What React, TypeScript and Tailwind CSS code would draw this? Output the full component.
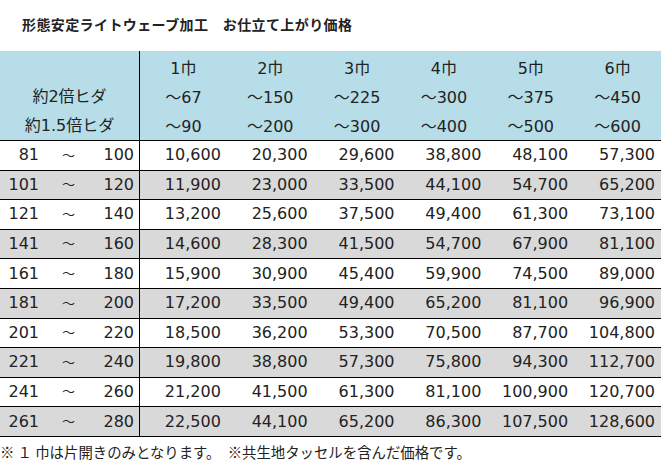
const rows: [number, number, number[]][] = [
  [81, 100, [10600, 20300, 29600, 38800, 48100, 57300]],
  [101, 120, [11900, 23000, 33500, 44100, 54700, 65200]],
  [121, 140, [13200, 25600, 37500, 49400, 61300, 73100]],
  [141, 160, [14600, 28300, 41500, 54700, 67900, 81100]],
  [161, 180, [15900, 30900, 45400, 59900, 74500, 89000]],
  [181, 200, [17200, 33500, 49400, 65200, 81100, 96900]],
  [201, 220, [18500, 36200, 53300, 70500, 87700, 104800]],
  [221, 240, [19800, 38800, 57300, 75800, 94300, 112700]],
  [241, 260, [21200, 41500, 61300, 81100, 100900, 120700]],
  [261, 280, [22500, 44100, 65200, 86300, 107500, 128600]],
];

const widths = [
  ['1巾', '～67', '～90'],
  ['2巾', '～150', '～200'],
  ['3巾', '～225', '～300'],
  ['4巾', '～300', '～400'],
  ['5巾', '～375', '～500'],
  ['6巾', '～450', '～600'],
];

const font = { fontFamily: '"DejaVu Sans", "Noto Sans CJK JP", sans-serif' };
const jp = { fontFamily: '"Noto Sans CJK JP", sans-serif' };

export default function App() {
  return (
    <div className="w-[661px] h-[468px] bg-white text-[#222] overflow-hidden" style={font}>
      <div className="h-[51px] pl-[22px] pt-[14px] text-[14px] font-bold leading-[20px] tracking-[0.4px]" style={jp}>
        形態安定ライトウェーブ加工　お仕立て上がり価格
      </div>

      <div className="flex bg-[#b7dde8] h-[90px] border-b border-black text-[16px]">
        <div className="w-[140px] border-r border-black flex flex-col items-center pt-[3px]">
          <div className="h-[29px]" />
          <div className="h-[29px] leading-[29px]">約2倍ヒダ</div>
          <div className="h-[29px] leading-[29px]">約1.5倍ヒダ</div>
        </div>
        <div className="flex-1 grid grid-cols-6 pt-[3px]">
          {widths.map((w) => (
            <div key={w[0]} className="flex flex-col items-center">
              {w.map((t) => (
                <div key={t} className="h-[29px] leading-[29px]">{t}</div>
              ))}
            </div>
          ))}
        </div>
      </div>

      {rows.map(([a, b, prices], i) => (
        <div key={a} className={`flex h-[29.6px] border-b border-black text-[16px] ${i % 2 === 1 ? 'bg-[#d9d9d9]' : 'bg-white'}`}>
          <div className="w-[140px] border-r border-black flex items-center">
            <span className="w-[39px] text-right">{a}</span>
            <span className="w-[59px] text-center text-[13px]">～</span>
            <span className="w-[36px] text-right">{b}</span>
          </div>
          <div className="flex-1 grid grid-cols-6 items-center">
            {prices.map((p, j) => (
              <div key={j} className="text-right pr-[6px]">{p.toLocaleString('en-US')}</div>
            ))}
          </div>
        </div>
      ))}

      <div className="pt-[5px] text-[14.4px] leading-[20px] whitespace-pre" style={jp}>
        ※ １ 巾は片開きのみとなります。　※共生地タッセルを含んだ価格です。
      </div>
    </div>
  );
}
